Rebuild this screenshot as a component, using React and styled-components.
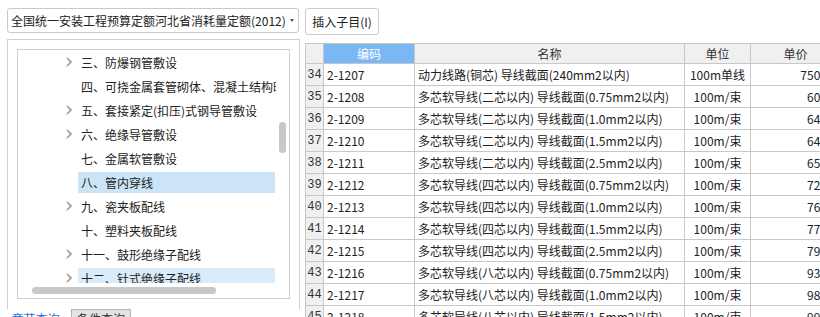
import React from 'react';
import styled, { createGlobalStyle } from 'styled-components';

const Global = createGlobalStyle`
  html, body { margin: 0; padding: 0; background: #fff; overflow: hidden; }
  body {
    font-family: "Noto Sans CJK SC", "Noto Sans", sans-serif;
    font-size: 12px;
    color: #333;
  }
`;

const Page = styled.div`
  width: 820px;
  height: 317px;
  overflow: hidden;
  display: flex;
  align-items: flex-start;
  padding: 8px 0 0 7px;
  box-sizing: border-box;
`;

const LeftCol = styled.div`
  width: 293px;
  flex-shrink: 0;
  display: flex;
  flex-direction: column;
`;

const Select = styled.div`
  width: 292px;
  height: 25px;
  box-sizing: border-box;
  border: 1px solid #c9c9c9;
  border-radius: 3px;
  display: flex;
  align-items: center;
  justify-content: space-between;
  padding: 0 4px 0 3px;
  white-space: nowrap;
  line-height: 23px;
  color: #222;
`;

const Caret = styled.span`
  width: 0;
  height: 0;
  border-left: 2.5px solid transparent;
  border-right: 2.5px solid transparent;
  border-top: 3px solid #555;
`;

const Panel = styled.div`
  margin-top: 6px;
  border: 1px solid #cfcfcf;
  border-bottom: none;
  padding: 9px 9px 10px 9px;
`;

const TreeBox = styled.div`
  border: 1px solid #cfcfcf;
  display: grid;
  grid-template-columns: 258px 13px;
  grid-template-rows: 233px 15px;
`;

const Tree = styled.div`
  overflow: hidden;
  padding-top: 1px;
`;

const TreeRow = styled.div`
  height: 22px;
  margin-bottom: 2px;
  display: flex;
  align-items: center;
  padding-left: 46px;
  white-space: nowrap;
`;

const Toggle = styled.span`
  width: 14px;
  flex-shrink: 0;
  display: flex;
  align-items: center;
  padding-left: 2px;
  box-sizing: border-box;
`;

const Label = styled.span`
  flex: 1;
  min-width: 0;
  height: 21px;
  line-height: 21px;
  padding-left: 3px;
  margin-right: 1px;
  background: ${(p) => (p.$state === 'selected' ? '#cce4f7' : p.$state === 'hover' ? '#daebfa' : 'transparent')};
  color: #222;
`;

const VScroll = styled.div`
  padding: 72px 0 0 3px;
`;

const VThumb = styled.div`
  width: 7px;
  height: 31px;
  border-radius: 4px;
  background: #c8c8c8;
`;

const HScroll = styled.div`
  padding: 4px 0 0 14px;
`;

const HThumb = styled.div`
  width: 184px;
  height: 7px;
  border-radius: 4px;
  background: #c8c8c8;
`;

const TabBar = styled.div`
  display: flex;
  align-items: flex-start;
  margin-left: -7px;
`;

const Tab = styled.div`
  height: 22px;
  box-sizing: border-box;
  line-height: 18px;
  padding-top: 0;
  text-align: center;
  color: ${(p) => (p.$active ? '#1f6fd6' : '#333')};
  background: ${(p) => (p.$active ? '#fff' : '#e3e3e3')};
  border: 1px solid ${(p) => (p.$active ? 'transparent' : '#b5b5b5')};
  width: ${(p) => p.$w}px;
`;

const RightCol = styled.div`
  margin-left: 5px;
  display: flex;
  flex-direction: column;
  align-items: flex-start;
  flex-shrink: 0;
`;

const Button = styled.button`
  width: 74px;
  height: 27px;
  box-sizing: border-box;
  border: 1px solid #cccccc;
  border-radius: 3px;
  background: #fff;
  font-family: inherit;
  font-size: 12px;
  color: #222;
  padding: 0;
`;

const Table = styled.table`
  margin-top: 8px;
  border-collapse: collapse;
  table-layout: fixed;
  width: 535px;
`;

const Th = styled.th`
  height: 19px;
  padding: 0;
  border: 1px solid #c8c8c8;
  font-weight: normal;
  line-height: 19px;
  text-align: center;
  background: ${(p) => (p.$active ? '#7ab8f4' : '#f0f0f0')};
  color: ${(p) => (p.$active ? '#fff' : '#333')};
`;

const Tr = styled.tr`
  height: 22px;
`;

const Td = styled.td`
  padding: 0 ${(p) => (p.$align === 'right' ? '3px' : '0')} 0 ${(p) => (p.$align === 'left' ? '3px' : '0')};
  border: 1px solid #c8c8c8;
  line-height: 20px;
  white-space: nowrap;
  overflow: hidden;
  text-align: ${(p) => p.$align || 'left'};
  color: #222;
`;

const NumTd = styled.td`
  padding: 0;
  border: 1px solid #c8c8c8;
  background: #f0f0f0;
  text-align: center;
  font-family: "Liberation Mono", monospace;
  font-size: 12px;
  line-height: 20px;
  color: #333;
`;

const Chevron = () => (
  <svg width="6" height="10" viewBox="0 0 6 10">
    <path d="M1 1 L5 5 L1 9" fill="none" stroke="#9a9a9a" strokeWidth="1.6" />
  </svg>
);

const treeItems = [
  { t: '三、防爆钢管敷设', c: true },
  { t: '四、可挠金属套管砌体、混凝土结构暗配', c: false },
  { t: '五、套接紧定(扣压)式钢导管敷设', c: true },
  { t: '六、绝缘导管敷设', c: true },
  { t: '七、金属软管敷设', c: false },
  { t: '八、管内穿线', c: false, s: 'selected' },
  { t: '九、瓷夹板配线', c: true },
  { t: '十、塑料夹板配线', c: false },
  { t: '十一、鼓形绝缘子配线', c: true },
  { t: '十二、针式绝缘子配线', c: true, s: 'hover' },
];

const rows = [
  [34, '2-1207', '动力线路(铜芯) 导线截面(240mm2以内)', '100m单线', '750.52'],
  [35, '2-1208', '多芯软导线(二芯以内) 导线截面(0.75mm2以内)', '100m/束', '60.38'],
  [36, '2-1209', '多芯软导线(二芯以内) 导线截面(1.0mm2以内)', '100m/束', '64.15'],
  [37, '2-1210', '多芯软导线(二芯以内) 导线截面(1.5mm2以内)', '100m/束', '64.87'],
  [38, '2-1211', '多芯软导线(二芯以内) 导线截面(2.5mm2以内)', '100m/束', '65.93'],
  [39, '2-1212', '多芯软导线(四芯以内) 导线截面(0.75mm2以内)', '100m/束', '72.41'],
  [40, '2-1213', '多芯软导线(四芯以内) 导线截面(1.0mm2以内)', '100m/束', '76.26'],
  [41, '2-1214', '多芯软导线(四芯以内) 导线截面(1.5mm2以内)', '100m/束', '77.64'],
  [42, '2-1215', '多芯软导线(四芯以内) 导线截面(2.5mm2以内)', '100m/束', '79.12'],
  [43, '2-1216', '多芯软导线(八芯以内) 导线截面(0.75mm2以内)', '100m/束', '93.55'],
  [44, '2-1217', '多芯软导线(八芯以内) 导线截面(1.0mm2以内)', '100m/束', '98.07'],
  [45, '2-1218', '多芯软导线(八芯以内) 导线截面(1.5mm2以内)', '100m/束', '99.73'],
];

export default function App() {
  return (
    <>
      <Global />
      <Page>
        <LeftCol>
          <Select>
            <span>全国统一安装工程预算定额河北省消耗量定额(2012)</span>
            <Caret />
          </Select>
          <Panel>
            <TreeBox>
              <Tree>
                {treeItems.map((it) => (
                  <TreeRow key={it.t}>
                    <Toggle>{it.c && <Chevron />}</Toggle>
                    <Label $state={it.s}>{it.t}</Label>
                  </TreeRow>
                ))}
              </Tree>
              <VScroll>
                <VThumb />
              </VScroll>
              <HScroll>
                <HThumb />
              </HScroll>
              <div />
            </TreeBox>
          </Panel>
          <TabBar>
            <Tab $active $w={71}>章节查询</Tab>
            <Tab $w={60}>条件查询</Tab>
          </TabBar>
        </LeftCol>
        <RightCol>
          <Button>插入子目(I)</Button>
          <Table>
            <colgroup>
              <col style={{ width: 18 }} />
              <col style={{ width: 91 }} />
              <col style={{ width: 270 }} />
              <col style={{ width: 66 }} />
              <col style={{ width: 90 }} />
            </colgroup>
            <thead>
              <tr>
                <Th />
                <Th $active>编码</Th>
                <Th>名称</Th>
                <Th>单位</Th>
                <Th>单价</Th>
              </tr>
            </thead>
            <tbody>
              {rows.map((r) => (
                <Tr key={r[0]}>
                  <NumTd>{r[0]}</NumTd>
                  <Td $align="left">{r[1]}</Td>
                  <Td $align="left">{r[2]}</Td>
                  <Td $align="center">{r[3]}</Td>
                  <Td $align="right">{r[4]}</Td>
                </Tr>
              ))}
            </tbody>
          </Table>
        </RightCol>
      </Page>
    </>
  );
}
